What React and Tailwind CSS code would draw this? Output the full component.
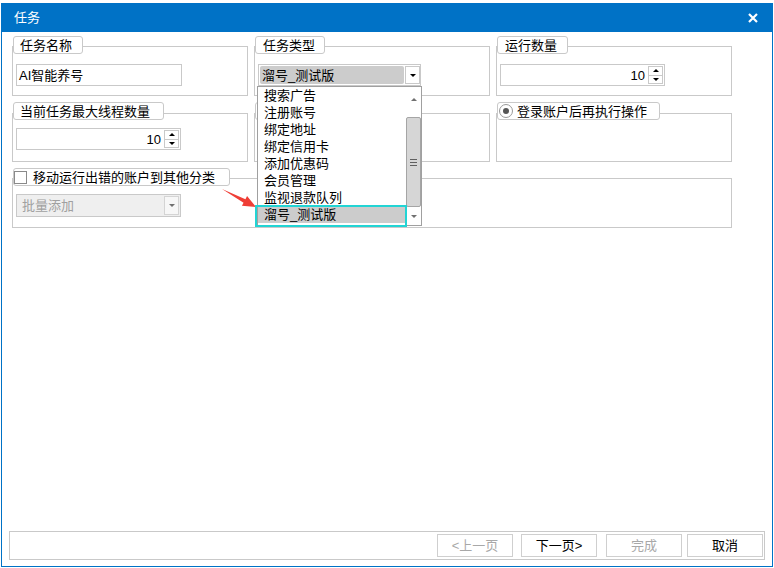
import React from 'react';

const items = ['搜索广告', '注册账号', '绑定地址', '绑定信用卡', '添加优惠码', '会员管理', '监视退款队列', '溜号_测试版'];

function Tri({ up, color = 'border-black' }) {
  return up ? (
    <div className={`w-0 h-0 border-x-[3px] border-x-transparent border-b-[3px] ${color === 'border-black' ? 'border-b-black' : 'border-b-[#707070]'}`} />
  ) : (
    <div className={`w-0 h-0 border-x-[3px] border-x-transparent border-t-[3px] ${color === 'border-black' ? 'border-t-black' : 'border-t-[#707070]'}`} />
  );
}

function Box({ h, w = 'w-[236px]', pt, tabTop = '-top-[11px]', tab, tabW, children }) {
  return (
    <div className={`relative ${w} ${h} ${pt} pl-[3px] border border-[#c9c9c9]`}>
      <div className={`absolute left-0 ${tabTop} ${tabW} h-[18px] bg-white border border-[#c9c9c9] rounded-[3px] flex items-center text-[13px] leading-none text-black`}>
        {tab}
      </div>
      {children}
    </div>
  );
}

function Spin({ value }) {
  return (
    <div className="w-[165px] h-[22px] border border-[#c9c9c9] bg-white flex items-center">
      <div className="flex-1 text-right pr-[3px] text-[13px] leading-none">{value}</div>
      <div className="w-[15px] h-[18px] mr-[1px] border border-[#c9c9c9] flex flex-col">
        <div className="flex-1 flex items-center justify-center border-b border-[#c9c9c9]">
          <Tri up />
        </div>
        <div className="flex-1 flex items-center justify-center">
          <Tri />
        </div>
      </div>
    </div>
  );
}

function Radio() {
  return (
    <div className="w-[14px] h-[14px] ml-[1px] rounded-full border border-[#9a9a9a] bg-white flex items-center justify-center">
      <div className="w-[6px] h-[6px] rounded-full bg-[#555]" />
    </div>
  );
}

export default function App() {
  return (
    <div className="relative w-[774px] h-[568px] bg-white overflow-hidden font-['Liberation_Sans','Noto_Sans_CJK_SC',sans-serif] text-black">
      <div className="mt-[3px] ml-[1px] w-[772px] h-[564px] border-x border-b border-[#0072c6] flex flex-col">
        {/* title bar */}
        <div className="h-[29px] bg-[#0072c6] flex items-center justify-between pl-[12px] pr-[14px]">
          <span className="text-white text-[13px] leading-none">任务</span>
          <svg width="10" height="10" viewBox="0 0 10 10">
            <path d="M1 1 L9 9 M9 1 L1 9" stroke="white" strokeWidth="2.2" />
          </svg>
        </div>

        <div className="pt-[14px] pl-[10px] flex flex-col">
          {/* row 1 */}
          <div className="flex gap-[6px]">
            <Box h="h-[50px]" pt="pt-[17px]" tabW="w-[70px]" tab={<span className="pl-[6px]">任务名称</span>}>
              <div className="w-[166px] h-[22px] border border-[#c9c9c9] pl-[2px] flex items-center text-[13px] leading-none">AI智能养号</div>
            </Box>
            <Box h="h-[50px]" pt="pt-[17px]" tabW="w-[70px]" tab={<span className="pl-[7px]">任务类型</span>}>
              <div className="relative">
                <div className="w-[163px] h-[22px] border border-[#c9c9c9] bg-white flex items-center pl-[1px]">
                  <div className="w-[144px] h-[18px] rounded-[2px] bg-[#cccccc] pl-[2px] flex items-center text-[13px] leading-none">溜号_测试版</div>
                  <div className="ml-[1px] w-[15px] h-[18px] border border-[#c9c9c9] flex items-center justify-center">
                    <Tri />
                  </div>
                </div>
                {/* dropdown list */}
                <div className="absolute z-10 left-[-1px] top-[22px] w-[165px] h-[140px] bg-white border border-[#a0a0a0] flex">
                  <div className="w-[148px] flex flex-col">
                    {items.map((t, i) => (
                      <div key={t} className={`h-[17px] pl-[6px] flex items-center text-[13px] leading-none ${i === 7 ? 'bg-[#cccccc]' : ''}`}>
                        {t}
                      </div>
                    ))}
                  </div>
                  <div className="w-[15px] flex flex-col items-center">
                    <div className="h-[16px] mt-[4px] flex items-center justify-center">
                      <Tri up color="gray" />
                    </div>
                    <div className="mt-[10px] w-[15px] h-[90px] rounded-[2px] border border-[#a5a5a5] bg-[#d6d6d6] flex flex-col items-center justify-center gap-[2px]">
                      <div className="w-[7px] h-px bg-[#606060]" />
                      <div className="w-[7px] h-px bg-[#606060]" />
                      <div className="w-[7px] h-px bg-[#606060]" />
                    </div>
                    <div className="h-[16px] mt-[1px] flex items-center justify-center">
                      <Tri color="gray" />
                    </div>
                  </div>
                  {/* annotation frame */}
                  <div className="absolute left-[-3px] top-[118px] w-[152px] h-[22px] border-2 border-[#22d4d4]" />
                </div>
              </div>
            </Box>
            <Box h="h-[50px]" pt="pt-[17px]" tabW="w-[71px]" tab={<span className="pl-[7px]">运行数量</span>}>
              <Spin value="10" />
            </Box>
          </div>

          {/* row 2 */}
          <div className="flex gap-[6px] mt-[17px]">
            <Box h="h-[49px]" pt="pt-[14px]" tabTop="-top-[12px]" tabW="w-[151px]" tab={<span className="pl-[6px]">当前任务最大线程数量</span>}>
              <Spin value="10" />
            </Box>
            <Box h="h-[49px]" pt="pt-[14px]" tabTop="-top-[12px]" tabW="w-[150px]" tab={<Radio />} />
            <Box
              h="h-[49px]"
              pt="pt-[14px]"
              tabTop="-top-[12px]"
              tabW="w-[163px]"
              tab={
                <>
                  <Radio />
                  <span className="pl-[4px]">登录账户后再执行操作</span>
                </>
              }
            />
          </div>

          {/* row 3 */}
          <div className="mt-[16px]">
            <Box
              w="w-[720px]"
              h="h-[50px]"
              pt="pt-[15px]"
              tabW="w-[217px]"
              tab={
                <>
                  <div className="w-[13px] h-[13px] border border-[#8a8a8a] bg-white" />
                  <span className="pl-[6px]">移动运行出错的账户到其他分类</span>
                </>
              }
            >
              <div className="w-[165px] h-[23px] border border-[#c9c9c9] bg-[#efefef] flex items-center">
                <span className="flex-1 pl-[5px] text-[13px] leading-none text-[#a0a0a0]">批量添加</span>
                <div className="w-[15px] h-[19px] mr-[1px] border border-[#d4d4d4] bg-[#f7f7f7] flex items-center justify-center">
                  <Tri color="gray" />
                </div>
              </div>
            </Box>
          </div>
        </div>

        <div className="flex-1" />

        {/* bottom buttons */}
        <div className="ml-[7px] mb-[6px] w-[756px] h-[29px] border border-[#c9c9c9] flex items-start justify-end pt-[2px] pr-[1px]">
          <button className="w-[76px] h-[23px] border border-[#cfcfcf] bg-white text-[13px] leading-none text-[#a8a8a8]">&lt;上一页</button>
          <button className="ml-[8px] w-[76px] h-[23px] border border-[#cfcfcf] bg-white text-[13px] leading-none">下一页&gt;</button>
          <button className="ml-[9px] w-[76px] h-[23px] border border-[#cfcfcf] bg-white text-[13px] leading-none text-[#a8a8a8]">完成</button>
          <button className="ml-[5px] w-[76px] h-[23px] border border-[#cfcfcf] bg-white text-[13px] leading-none">取消</button>
        </div>
      </div>

      {/* red annotation arrow */}
      <svg className="absolute left-[218px] top-[183px]" width="42" height="30" viewBox="0 0 42 30">
        <polygon points="4,6 27.43,16.16 29.07,13.07 38,24 23.93,22.79 25.57,19.7" fill="#ef3e36" />
      </svg>
    </div>
  );
}
